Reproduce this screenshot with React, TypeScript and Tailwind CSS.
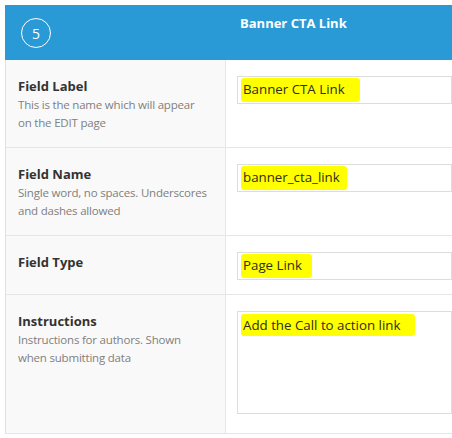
const rows = [
  {
    label: 'Field Label',
    desc: ['This is the name which will appear', 'on the EDIT page'],
    value: 'Banner CTA Link',
    h: 'h-[88px]',
    pr: 'pr-[15px]',
    kind: 'input',
  },
  {
    label: 'Field Name',
    desc: ['Single word, no spaces. Underscores', 'and dashes allowed'],
    value: 'banner_cta_link',
    h: 'h-[88px]',
    pr: 'pr-[7px]',
    kind: 'input',
  },
  {
    label: 'Field Type',
    desc: [],
    value: 'Page Link',
    h: 'h-[59px]',
    pr: 'pr-[10px]',
    kind: 'input',
  },
  {
    label: 'Instructions',
    desc: ['Instructions for authors. Shown', 'when submitting data'],
    value: 'Add the Call to action link',
    h: 'h-[139px]',
    pr: 'pr-[15px]',
    kind: 'textarea',
  },
];

function Marked({ text, pr }: { text: string; pr: string }) {
  return (
    <span className={`bg-[#ffff00] rounded-[3px] pl-[2px] ${pr} py-[2px] text-[#2e2e1a]`}>{text}</span>
  );
}

export default function App() {
  return (
    <div className="w-[452px] h-[438px] bg-white pt-[5px] pl-[5px] overflow-hidden font-['Open_Sans',sans-serif]">
      {/* header */}
      <div className="flex h-[55px] bg-[#2a9ad7] text-white">
        <div className="w-[221px] pl-[16px] pt-[13px]">
          <div className="w-[30px] h-[30px] rounded-full border border-white flex items-center justify-center text-[14px]">
            5
          </div>
        </div>
        <div className="flex-1 pl-[14px] pt-[9px] text-[13px] font-bold">Banner CTA Link</div>
      </div>

      {/* rows */}
      <div className="border-l border-[#e1e1e1]">
        {rows.map((r) => (
          <div key={r.label} className={`flex ${r.h} border-b border-[#e6e6e6]`}>
            <div className="w-[220px] shrink-0 bg-[#f9f9f9] border-r border-[#e6e6e6] pl-[12px] pt-[16px]">
              <div className="text-[13px] font-bold text-[#333] leading-[20px]">{r.label}</div>
              {r.desc.map((d) => (
                <div key={d} className="text-[11.5px] tracking-[-0.2px] text-[#808080] leading-[18px]">{d}</div>
              ))}
            </div>
            <div className="flex-1 pl-[11px] pt-[16px]">
              {r.kind === 'input' ? (
                <div className="h-[28px] border border-[#dddddd] bg-white pl-[3px] flex items-center text-[13.3px]">
                  <Marked text={r.value} pr={r.pr} />
                </div>
              ) : (
                <div className="h-[103px] border border-[#dddddd] bg-white pl-[3px] pt-[4px] text-[13.3px]">
                  <Marked text={r.value} pr={r.pr} />
                </div>
              )}
            </div>
          </div>
        ))}
      </div>
    </div>
  );
}
